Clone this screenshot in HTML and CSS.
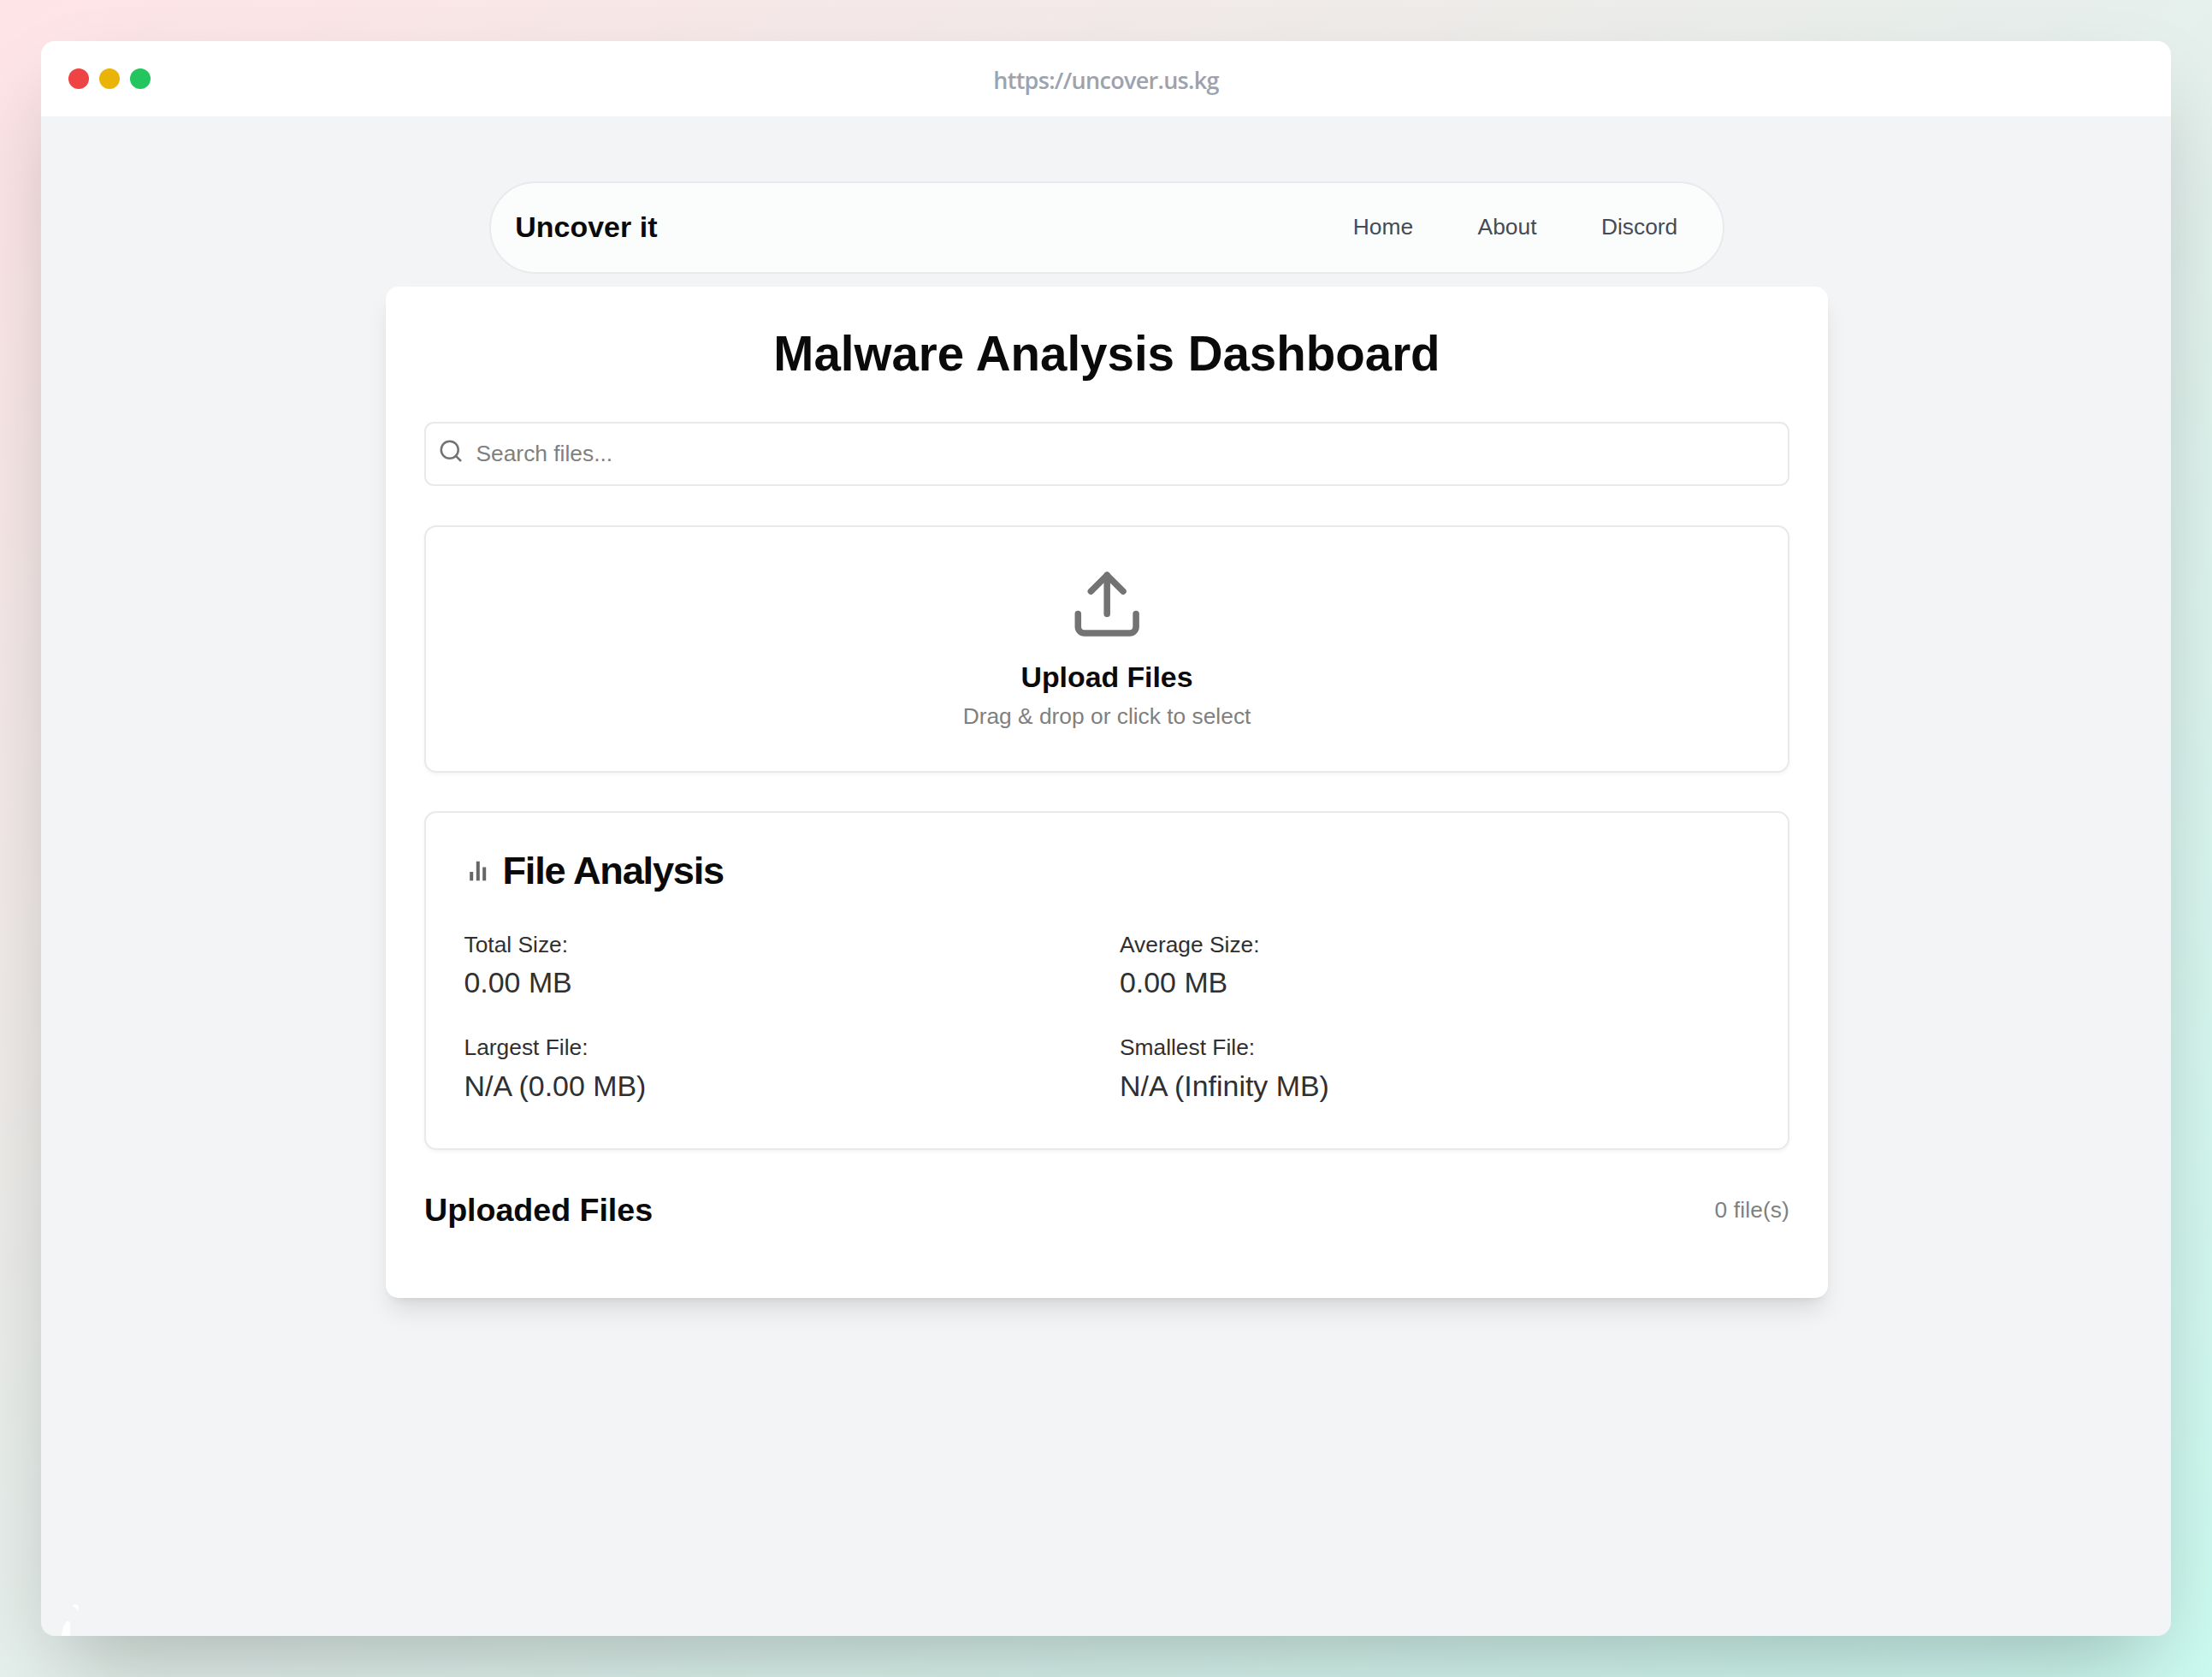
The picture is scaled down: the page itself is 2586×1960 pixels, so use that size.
FILE: index.html
```html
<!DOCTYPE html>
<html lang="en">
<head>
<meta charset="utf-8">
<title>Uncover it</title>
<link rel="stylesheet" href="styles.css">
</head>
<body>
<div class="window">
  <header class="titlebar">
    <div class="dots"><span class="dot red"></span><span class="dot yellow"></span><span class="dot green"></span></div>
    <div class="url">https://uncover.us.kg</div>
  </header>
  <div class="page">
    <nav class="nav">
      <span class="brand">Uncover it</span>
      <div class="links"><a>Home</a><a>About</a><a>Discord</a></div>
    </nav>
    <main class="card">
      <h1 class="title">Malware Analysis Dashboard</h1>
      <div class="search">
        <svg class="search-icon" viewBox="0 0 24 24"><circle cx="11" cy="11" r="8"/><path d="m21 21-4.3-4.3"/></svg>
        <span>Search files...</span>
      </div>
      <section class="panel upload">
        <svg class="upload-icon" viewBox="0 0 24 24"><path d="M21 15v4a2 2 0 0 1-2 2H5a2 2 0 0 1-2-2v-4"/><path d="m17 8-5-5-5 5"/><path d="M12 3v12"/></svg>
        <h3 class="upload-title">Upload Files</h3>
        <p class="muted">Drag &amp; drop or click to select</p>
      </section>
      <section class="panel analysis">
        <h2 class="panel-title">
          <svg class="bars-icon" viewBox="0 0 30 30"><path d="M8.2 16v10.2M15.8 3.8v22.4M23.2 10.5v15.7"/></svg>
          <span>File Analysis</span>
        </h2>
        <div class="stats">
          <div><p class="label">Total Size:</p><p class="value">0.00 MB</p></div>
          <div><p class="label">Average Size:</p><p class="value">0.00 MB</p></div>
          <div><p class="label">Largest File:</p><p class="value">N/A (0.00 MB)</p></div>
          <div><p class="label">Smallest File:</p><p class="value">N/A (Infinity MB)</p></div>
        </div>
      </section>
      <div class="files-head">
        <h2 class="files-title">Uploaded Files</h2>
        <span class="muted count">0 file(s)</span>
      </div>
    </main>
    <svg class="corner-mark" viewBox="0 0 40 40"><path d="M12.5 4.5Q16 2 19.5 4.5V11Q17 7 12.5 4.5Z"/><path d="M-.5 40Q2 28 5 24Q7.500 22 10 24V40Z"/></svg>
  </div>
</div>
</body>
</html>
```
FILE: styles.css
```css
* { box-sizing: border-box; margin: 0; padding: 0; }
body {
  width: 2586px;
  height: 1960px;
  padding: 48px;
  overflow: hidden;
  background: linear-gradient(to bottom right, #ffe4e6, #ccfbf1);
  font-family: "Liberation Sans", Arial, sans-serif;
  color: #0a0a0a;
}
.window {
  height: 1864px;
  display: flex;
  flex-direction: column;
  border-radius: 16px;
  overflow: hidden;
  background: #f3f4f6;
  box-shadow: 0 50px 100px -24px rgba(0, 0, 0, .25);
}
.titlebar {
  height: 88px;
  flex: none;
  display: grid;
  grid-template-columns: 1fr auto 1fr;
  align-items: center;
  padding: 0 32px;
  background: #fff;
}
.dots { display: flex; gap: 12px; }
.dot { width: 24px; height: 24px; border-radius: 50%; }
.red { background: #ef4444; }
.yellow { background: #eab308; }
.green { background: #22c55e; }
.url {
  font: 600 27px/40px "Open Sans", "Noto Sans", sans-serif;
  letter-spacing: -.7px;
  color: #9ca3af;
  padding-top: 3px;
}
.page {
  position: relative;
  flex: 1;
  display: flex;
  flex-direction: column;
  align-items: center;
  padding-top: 75.5px;
}
.nav {
  width: 1444.5px;
  height: 108.5px;
  margin-left: 2px;
  display: flex;
  align-items: center;
  justify-content: space-between;
  padding: 0 53px 0 28.5px;
  border: 2px solid #e8eaed;
  border-radius: 55px;
  background: #fbfdfc;
}
.brand { font-size: 33.9px; line-height: 52.7px; font-weight: 700; letter-spacing: .05px; }
.links { display: flex; gap: 75.5px; padding-top: 1px; font-size: 26.35px; line-height: 37.6px; color: #434b57; }
.card {
  width: 1686px;
  height: 1181.7px;
  margin-top: 15px;
  margin-left: 2px;
  padding: 45.2px 45px;
  border-radius: 15px;
  background: #fff;
  box-shadow: 0 18.8px 28.2px -5.6px rgba(0, 0, 0, .1), 0 7.5px 11.3px -7.5px rgba(0, 0, 0, .1);
}
.title { font-size: 56.5px; line-height: 67.8px; text-align: center; letter-spacing: -.02px; }
.search {
  height: 75.3px;
  margin: 45.2px 0;
  display: flex;
  align-items: center;
  gap: 15px;
  padding-left: 13.5px;
  border: 2px solid #e9e9e9;
  border-radius: 11px;
  font-size: 26.35px;
  color: #808080;
}
svg { fill: none; stroke: #737373; stroke-width: 2; stroke-linecap: round; stroke-linejoin: round; }
.search-icon { width: 30px; height: 30px; margin-bottom: 7px; }
.panel {
  border: 2px solid #e9e9e9;
  border-radius: 14px;
  padding: 45px 44.5px;
  box-shadow: 0 2px 4px rgba(0, 0, 0, .05);
}
.upload {
  height: 289.6px;
  display: flex;
  flex-direction: column;
  align-items: center;
}
.upload-icon { width: 90.4px; height: 90.4px; margin-bottom: 13.5px; flex: none; }
.upload-title { margin-bottom: 1.5px; font-size: 33.9px; line-height: 52.7px; letter-spacing: -.05px; }
.muted { font-size: 26.35px; line-height: 37.65px; color: #808080; }
.count { letter-spacing: .12px; }
.analysis { height: 395.3px; margin-top: 45.2px; }
.panel-title {
  display: flex;
  align-items: center;
  gap: 15px;
  font-size: 45.2px;
  line-height: 45.2px;
  letter-spacing: -1.25px;
}
.bars-icon { width: 30px; height: 30px; stroke: #666; stroke-width: 4; stroke-linecap: butt; }
.stats {
  display: grid;
  grid-template-columns: 1fr 1fr;
  gap: 30px;
  margin-top: 45.2px;
  color: #303030;
}
.label { font-size: 26.35px; line-height: 37.65px; }
.value { margin-top: -1px; padding-bottom: 1px; font-size: 33.9px; line-height: 52.7px; }
.files-head {
  display: flex;
  align-items: center;
  justify-content: space-between;
  margin-top: 45.2px;
}
.files-title { padding-bottom: 1px; font-size: 37.65px; line-height: 51.7px; letter-spacing: -.05px; }
/* decoration lying over the page's bottom-left corner */
.corner-mark {
  position: absolute;
  left: 24px;
  bottom: 0;
  width: 40px;
  height: 40px;
  fill: #fff;
  stroke: none;
}
```
